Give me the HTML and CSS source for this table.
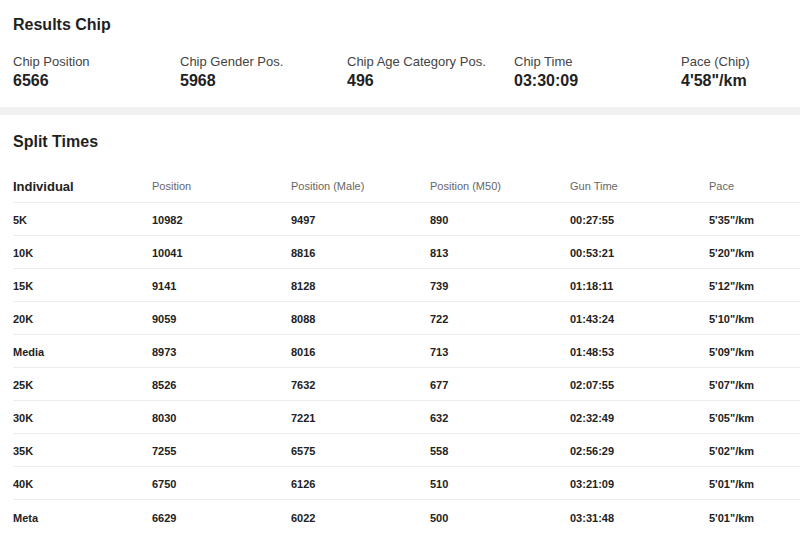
FILE: index.html
```html
<!DOCTYPE html>
<html lang="en">
<head>
<meta charset="utf-8">
<title>Results</title>
<link rel="stylesheet" href="styles.css">
</head>
<body>
<div class="page">
  <section class="card chip">
    <h2 class="title">Results Chip</h2>
    <div class="stats">
      <div class="stat"><div class="label">Chip Position</div><div class="value">6566</div></div>
      <div class="stat"><div class="label">Chip Gender Pos.</div><div class="value">5968</div></div>
      <div class="stat"><div class="label">Chip Age Category Pos.</div><div class="value">496</div></div>
      <div class="stat"><div class="label">Chip Time</div><div class="value">03:30:09</div></div>
      <div class="stat"><div class="label">Pace (Chip)</div><div class="value">4'58"/km</div></div>
    </div>
  </section>
  <div class="band"></div>
  <section class="card splits">
    <h2 class="title">Split Times</h2>
    <div class="table">
      <div class="row head">
        <div class="cell first">Individual</div>
        <div class="cell">Position</div>
        <div class="cell">Position (Male)</div>
        <div class="cell">Position (M50)</div>
        <div class="cell">Gun Time</div>
        <div class="cell">Pace</div>
      </div>
      <div class="row"><div class="cell">5K</div><div class="cell">10982</div><div class="cell">9497</div><div class="cell">890</div><div class="cell">00:27:55</div><div class="cell">5'35"/km</div></div>
      <div class="row"><div class="cell">10K</div><div class="cell">10041</div><div class="cell">8816</div><div class="cell">813</div><div class="cell">00:53:21</div><div class="cell">5'20"/km</div></div>
      <div class="row"><div class="cell">15K</div><div class="cell">9141</div><div class="cell">8128</div><div class="cell">739</div><div class="cell">01:18:11</div><div class="cell">5'12"/km</div></div>
      <div class="row"><div class="cell">20K</div><div class="cell">9059</div><div class="cell">8088</div><div class="cell">722</div><div class="cell">01:43:24</div><div class="cell">5'10"/km</div></div>
      <div class="row"><div class="cell">Media</div><div class="cell">8973</div><div class="cell">8016</div><div class="cell">713</div><div class="cell">01:48:53</div><div class="cell">5'09"/km</div></div>
      <div class="row"><div class="cell">25K</div><div class="cell">8526</div><div class="cell">7632</div><div class="cell">677</div><div class="cell">02:07:55</div><div class="cell">5'07"/km</div></div>
      <div class="row"><div class="cell">30K</div><div class="cell">8030</div><div class="cell">7221</div><div class="cell">632</div><div class="cell">02:32:49</div><div class="cell">5'05"/km</div></div>
      <div class="row"><div class="cell">35K</div><div class="cell">7255</div><div class="cell">6575</div><div class="cell">558</div><div class="cell">02:56:29</div><div class="cell">5'02"/km</div></div>
      <div class="row"><div class="cell">40K</div><div class="cell">6750</div><div class="cell">6126</div><div class="cell">510</div><div class="cell">03:21:09</div><div class="cell">5'01"/km</div></div>
      <div class="row last"><div class="cell">Meta</div><div class="cell">6629</div><div class="cell">6022</div><div class="cell">500</div><div class="cell">03:31:48</div><div class="cell">5'01"/km</div></div>
    </div>
  </section>
</div>
</body>
</html>
```
FILE: styles.css
```css
html, body {
  margin: 0;
  padding: 0;
  background: #ffffff;
}
body {
  font-family: "Liberation Sans", Arial, Helvetica, sans-serif;
  color: #222222;
}
.page {
  width: 100%;
  overflow: hidden;
}
.card {
  padding: 0 0 0 13px;
}
.chip {
  padding-top: 15px;
  padding-bottom: 17px;
}
.title {
  margin: 0;
  font-size: 16px;
  line-height: 20px;
  font-weight: bold;
  color: #1f1f1f;
}
.stats {
  display: grid;
  grid-template-columns: 167px 167px 167px 167px 1fr;
  margin-top: 19px;
}
.label {
  font-size: 13px;
  line-height: 16px;
  color: #444444;
}
.value {
  margin-top: 2px;
  font-size: 16px;
  line-height: 18px;
  font-weight: bold;
  color: #222222;
}
.band {
  height: 8px;
  background: #f1f1f1;
}
.splits {
  padding-top: 17px;
}
.table {
  margin-top: 18px;
}
.row {
  display: grid;
  grid-template-columns: 139px 139px 139px 140px 139px 1fr;
  height: 33px;
  box-sizing: border-box;
  align-items: center;
  border-bottom: 1px solid #ececec;
  padding-top: 2px;
  font-size: 11px;
  font-weight: bold;
  color: #222222;
}
.row.last {
  border-bottom: none;
}
.row.head {
  padding-top: 0;
  font-weight: normal;
  color: #666666;
}
.row.head .first {
  font-size: 13px;
  font-weight: bold;
  color: #222222;
}
```
